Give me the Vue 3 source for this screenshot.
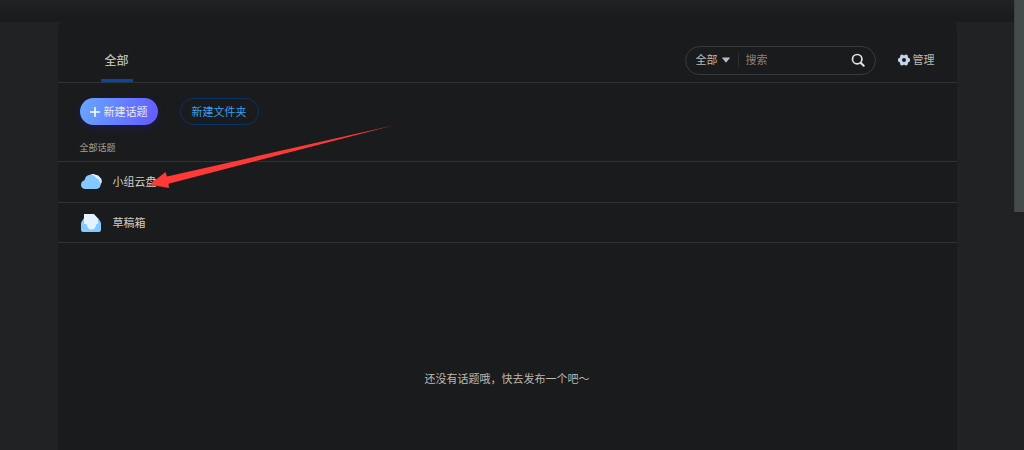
<script setup>
import { ref } from 'vue'

const keyword = ref('')
const scope = ref('全部')
const folders = [
  { name: '小组云盘', icon: 'cloud' },
  { name: '草稿箱', icon: 'draft' },
]
</script>

<template>
  <div class="page">
    <div class="content">
      <header class="topbar"></header>
      <main class="panel">
        <div class="head">
          <nav class="tabs">
            <a class="tab" href="#all">全部</a>
          </nav>
          <form class="search" @submit.prevent>
            <select v-model="scope" class="scope" aria-label="搜索范围">
              <option>全部</option>
            </select>
            <svg class="caret" viewBox="0 0 8 6" aria-hidden="true">
              <path d="M.8.5h6.4q.8 0 .4.7L4.6 5.1q-.6.7-1.2 0L.4 1.2Q0 .5.8.5z" fill="#b4bfca" />
            </svg>
            <span class="divider"></span>
            <input v-model="keyword" class="keyword" type="text" placeholder="搜索" aria-label="搜索" />
            <button class="go" type="submit" aria-label="搜索">
              <svg viewBox="0 0 14 14" aria-hidden="true">
                <circle cx="6.2" cy="6.2" r="4.7" fill="none" stroke="#e2e2e0" stroke-width="1.7" />
                <path d="M9.7 9.7l3 3" stroke="#e2e2e0" stroke-width="2" stroke-linecap="round" />
              </svg>
            </button>
          </form>
          <button class="manage" type="button">
            <svg viewBox="0 0 12 12" aria-hidden="true">
              <path
                fill="#c5d4e9"
                fill-rule="evenodd"
                d="M3.6.6Q4.4.2 5 1Q6 1.7 7 1Q7.6.2 8.4.6L9.7 1.4Q10.2 1.9 9.8 2.7Q9.8 3.8 11 4.1Q12 4.3 12 5.2V6.8Q12 7.7 11 7.9Q9.8 8.2 9.8 9.3Q10.2 10.1 9.7 10.6L8.4 11.4Q7.6 11.8 7 11Q6 10.3 5 11Q4.4 11.8 3.6 11.4L2.3 10.6Q1.8 10.1 2.2 9.3Q2.2 8.2 1 7.9Q0 7.7 0 6.8V5.2Q0 4.3 1 4.1Q2.2 3.8 2.2 2.7Q1.8 1.9 2.3 1.4ZM6 4A2 2 0 1 0 6 8A2 2 0 1 0 6 4Z"
              />
            </svg>
            管理
          </button>
        </div>

        <div class="actions">
          <button class="btn primary" type="button">
            <svg viewBox="0 0 10 10" aria-hidden="true">
              <path d="M5 .5v9M.5 5h9" stroke="#fff" stroke-width="1.5" stroke-linecap="round" />
            </svg>
            新建话题
          </button>
          <button class="btn outline" type="button">新建文件夹</button>
        </div>

        <h2 class="caption">全部话题</h2>

        <ul class="list">
          <li v-for="item in folders" :key="item.name" class="row">
            <svg v-if="item.icon === 'cloud'" class="icon" viewBox="0 0 22 20" aria-hidden="true">
              <path d="M10 3Q13 .9 16 2.900Q18.500 2.700 19.600 5Q22.700 7.200 21.500 11Q20 14 17 13.500L9 8z" fill="#e1f1ff" />
              <path
                d="M5.5 17Q1.500 17 1 13.200Q.8 9.400 4.500 8.300Q5.500 3 10.200 2.800Q14 2.700 16 6Q19.200 6.800 19.500 9.600Q21.500 10.800 20.600 13.600Q19.700 17 16 17z"
                fill="#84c9ff"
              />
            </svg>
            <svg v-else class="icon" viewBox="0 0 22 20" aria-hidden="true">
              <path d="M4 5L2 8Q1 9.200 1 10.800v6.200Q1 19 3 19h16q2 0 2-2v-6.200q0-1.600-1-2.800L18 5z" fill="#84c9ff" />
              <path d="M4 1h10l4 4.5v5.500h-1.500q-1 5.500-5 5.500t-5-5.500H4z" fill="#e5f3ff" />
            </svg>
            <a class="name" :href="'#' + item.icon">{{ item.name }}</a>
            <svg v-if="item.icon === 'cloud'" class="pointer" viewBox="0 0 244 64" aria-hidden="true">
              <path d="M243 .5L17 51.500L15.500 47L1 58.500L2 60L19 63L18.500 58.700Z" fill="#ff3838" />
            </svg>
          </li>
        </ul>

        <p class="empty">还没有话题哦，快去发布一个吧～</p>
      </main>
    </div>
    <div class="scrollbar"><div class="thumb"></div></div>
  </div>
</template>

<style>
body {
  background: #202224;
}
</style>

<style scoped>
.page {
  display: flex;
  height: 100vh;
  overflow: hidden;
  background: #202224;
  color: #bfb9ae;
  font: 11px/16px "Liberation Sans", "Noto Sans CJK SC", sans-serif;
}
.page * {
  box-sizing: border-box;
}
button,
input,
select {
  margin: 0;
  padding: 0;
  border: 0;
  background: none;
  color: inherit;
  font: inherit;
  outline: none;
}
a {
  color: inherit;
  text-decoration: none;
}
svg {
  display: block;
  flex: none;
}
.content {
  flex: 1;
  display: flex;
  flex-direction: column;
  min-width: 0;
}
.topbar {
  flex: none;
  height: 22px;
  background: linear-gradient(#212325, #1a1b1d 70%);
}
.panel {
  flex: 1;
  width: 100%;
  max-width: 899px;
  margin: 0 auto;
  border-radius: 6px 6px 0 0;
  background: #1a1b1d;
}
.head {
  display: flex;
  align-items: center;
  height: 61px;
  padding: 0 22px 0 43px;
  border-bottom: 1px solid #303233;
}
.tabs {
  flex: 1;
  display: flex;
  align-self: stretch;
}
.tab {
  display: flex;
  align-items: center;
  justify-content: center;
  width: 32px;
  padding-top: 20px;
  border-bottom: 3px solid #0248a8;
  border-radius: 1px;
  font-size: 12px;
  font-weight: 500;
}
.search {
  display: flex;
  align-items: center;
  width: 191px;
  height: 29px;
  margin: 16px 22px 0 0;
  padding: 0 10px;
  border: 1px solid #383b3d;
  border-radius: 15px;
}
.scope {
  width: 22px;
  appearance: none;
}
.caret {
  width: 8px;
  height: 6px;
  margin-left: 4px;
}
.divider {
  width: 1px;
  height: 14px;
  margin: 0 7px 0 8px;
  background: #2c2f31;
}
.keyword {
  flex: 1;
  min-width: 0;
}
.keyword::placeholder {
  color: #85827c;
}
.go svg {
  width: 14px;
  height: 14px;
}
.manage {
  display: flex;
  align-items: center;
  gap: 3px;
  margin-top: 16px;
}
.manage svg {
  width: 12px;
  height: 12px;
}
.actions {
  display: flex;
  gap: 22px;
  padding: 15px 22px 0;
}
.btn {
  display: flex;
  align-items: center;
  justify-content: center;
  gap: 4px;
  height: 27px;
  border-radius: 14px;
}
.primary {
  width: 78px;
  background: linear-gradient(110deg, #68a8ff, #6259ff);
  box-shadow: 0 3px 8px rgba(40, 30, 150, 0.35);
  color: #ebe9e7;
}
.primary svg {
  width: 10px;
  height: 10px;
}
.outline {
  width: 79px;
  border: 1px solid #063369;
  color: #3b9eea;
}
.caption {
  margin: 15px 22px 5px;
  color: #a8a297;
  font-size: 9px;
  font-weight: 400;
  line-height: 16px;
}
.list {
  margin: 0;
  padding: 0;
  border-top: 1px solid #303233;
  list-style: none;
}
.row {
  position: relative;
  display: flex;
  align-items: center;
  gap: 11px;
  height: 41px;
  padding: 0 22px;
  border-bottom: 1px solid #303233;
}
.row:last-child {
  height: 40px;
}
.icon {
  width: 22px;
  height: 20px;
}
.name {
  color: #d2cdc4;
}
.pointer {
  position: absolute;
  left: 92px;
  bottom: 13px;
  width: 244px;
  height: 64px;
}
.empty {
  margin: 128px 0 0;
  text-align: center;
}
.scrollbar {
  flex: none;
  width: 10px;
  background: #1e2223;
}
.thumb {
  height: 212px;
  border-left: 1px solid #3c4244;
  background: #454b4d;
}
</style>
